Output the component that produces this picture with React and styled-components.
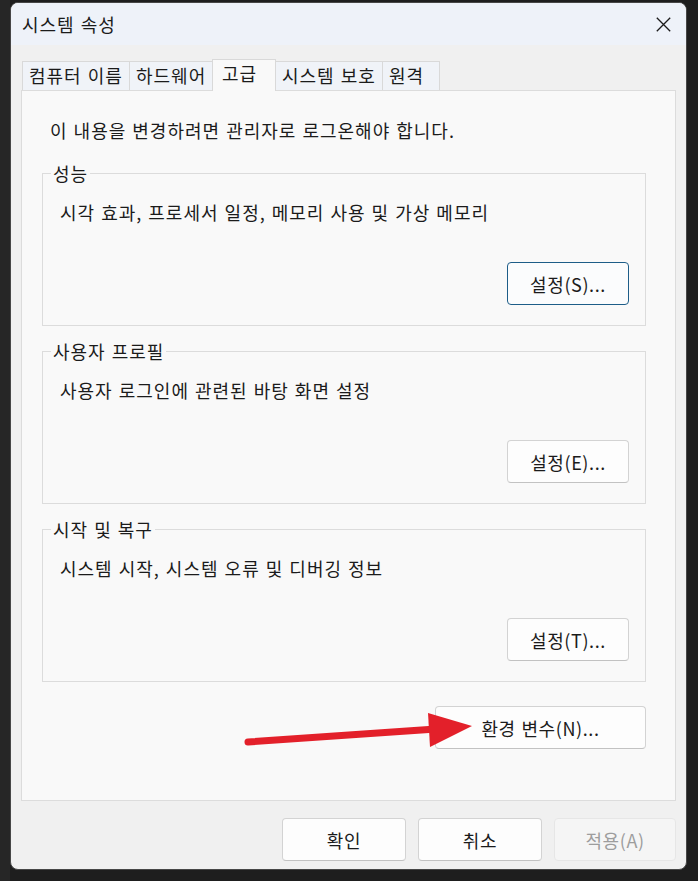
import React from "react";
import styled, { createGlobalStyle } from "styled-components";

const GlobalStyle = createGlobalStyle`
  html, body {
    margin: 0;
    padding: 0;
    background: #1f1f1f;
  }
  body {
    font-family: "Noto Sans CJK KR", "Noto Sans", sans-serif;
    color: #1b1b1b;
  }
  * { box-sizing: border-box; }
`;

const Desktop = styled.div`
  position: relative;
  width: 698px;
  height: 881px;
  padding: 2px 11px 11px 10px;
  background:
    linear-gradient(to right, #262626 0, #262626 10px, transparent 10px),
    #1e1e1e;
  overflow: hidden;
`;

const Dialog = styled.div`
  width: 677px;
  height: 868px;
  display: flex;
  flex-direction: column;
  background: #f0f0f0;
  border: 1px solid #474747;
  border-radius: 8px;
  overflow: hidden;
`;

const TitleBar = styled.div`
  height: 42px;
  flex: none;
  display: flex;
  align-items: center;
  justify-content: space-between;
  padding: 0 15px 0 11px;
  background: #eef2f9;
`;

const Title = styled.span`
  font-size: 18px;
  letter-spacing: 1px;
  word-spacing: 1px;
  line-height: 24px;
`;

const CloseButton = styled.div`
  width: 15px;
  height: 15px;
  display: flex;
  svg { display: block; }
`;

const Body = styled.div`
  flex: 1;
  display: flex;
  flex-direction: column;
  padding: 14px 10px 0 10px;
`;

const TabRow = styled.div`
  display: flex;
  align-items: flex-end;
  height: 31px;
  padding-left: 1px;
`;

const Tab = styled.div`
  position: relative;
  width: ${(p) => p.$w}px;
  height: ${(p) => (p.$active ? 32 : 29)}px;
  margin-left: ${(p) => (p.$first ? 0 : -1)}px;
  margin-bottom: ${(p) => (p.$active ? -1 : 0)}px;
  z-index: ${(p) => (p.$active ? 1 : 0)};
  padding-left: ${(p) => (p.$active ? 9 : 6)}px;
  border: 1px solid #d9d9d9;
  border-bottom: none;
  background: ${(p) => (p.$active ? "#f9f9f9" : "#f0f3f8")};
  font-size: 18px;
  letter-spacing: 1px;
  word-spacing: 1px;
  line-height: 26px;
  white-space: nowrap;
  overflow: hidden;
`;

const Panel = styled.div`
  height: 711px;
  display: flex;
  flex-direction: column;
  padding: 27px 29px 0 20px;
  background: #f9f9f9;
  border: 1px solid #dcdcdc;
`;

const Text = styled.div`
  font-size: 18px;
  letter-spacing: 1px;
  word-spacing: 1px;
  line-height: 24px;
  padding-left: ${(p) => p.$indent || 0}px;
  white-space: nowrap;
`;

const Group = styled.fieldset`
  margin: ${(p) => p.$top}px 0 0 0;
  padding: 0;
  border: 1px solid #dcdcdc;
  min-width: 0;
`;

const Legend = styled.legend`
  margin-left: 8px;
  padding: 0 2px;
  font-size: 18px;
  letter-spacing: 1px;
  word-spacing: 1px;
  line-height: 20px;
`;

const GroupBody = styled.div`
  display: flex;
  flex-direction: column;
  padding: 17px 16px 20px 17px;
`;

const ButtonRow = styled.div`
  display: flex;
  justify-content: flex-end;
  gap: 12px;
  margin-top: ${(p) => p.$top || 0}px;
`;

const Button = styled.div`
  width: ${(p) => p.$w}px;
  height: 43px;
  display: flex;
  align-items: center;
  justify-content: center;
  border-radius: 4px;
  font-size: 18px;
  letter-spacing: 0.6px;
  word-spacing: 1px;
  background: ${(p) => (p.$disabled ? "#f5f5f5" : p.$focus ? "#fbfcfd" : "#fdfdfd")};
  color: ${(p) => (p.$disabled ? "#9d9d9d" : "#1b1b1b")};
  border: 1px solid
    ${(p) => (p.$disabled ? "#e6e6e6" : p.$focus ? "#1d5d88" : "#d3d3d3")};
  border-bottom-color: ${(p) =>
    p.$disabled ? "#e6e6e6" : p.$focus ? "#1d5d88" : "#c2c2c2"};
  white-space: nowrap;
`;

const Footer = styled.div`
  display: flex;
  justify-content: flex-end;
  gap: 12px;
  padding-top: 17px;
`;

const ArrowOverlay = styled.svg`
  position: absolute;
  left: 0;
  top: 0;
  pointer-events: none;
`;

const tabs = [
  { label: "컴퓨터 이름", w: 108 },
  { label: "하드웨어", w: 84 },
  { label: "고급", w: 64, active: true },
  { label: "시스템 보호", w: 108 },
  { label: "원격", w: 58 },
];

const groups = [
  { title: "성능", desc: "시각 효과, 프로세서 일정, 메모리 사용 및 가상 메모리", btn: "설정(S)...", focus: true, top: 21 },
  { title: "사용자 프로필", desc: "사용자 로그인에 관련된 바탕 화면 설정", btn: "설정(E)...", top: 15 },
  { title: "시작 및 복구", desc: "시스템 시작, 시스템 오류 및 디버깅 정보", btn: "설정(T)...", top: 15 },
];

export default function App() {
  return (
    <>
      <GlobalStyle />
      <Desktop>
        <Dialog>
          <TitleBar>
            <Title>시스템 속성</Title>
            <CloseButton>
              <svg width="15" height="15" viewBox="0 0 15 15">
                <path d="M0.8 0.8 L14.2 14.2 M14.2 0.8 L0.8 14.2" stroke="#1b1b1b" strokeWidth="1.3" fill="none" />
              </svg>
            </CloseButton>
          </TitleBar>
          <Body>
            <TabRow>
              {tabs.map((t, i) => (
                <Tab key={t.label} $w={t.w} $active={t.active} $first={i === 0}>
                  {t.label}
                </Tab>
              ))}
            </TabRow>
            <Panel>
              <Text $indent={8}>이 내용을 변경하려면 관리자로 로그온해야 합니다.</Text>
              {groups.map((g) => (
                <Group key={g.title} $top={g.top}>
                  <Legend>{g.title}</Legend>
                  <GroupBody>
                    <Text>{g.desc}</Text>
                    <ButtonRow $top={38}>
                      <Button $w={122} $focus={g.focus}>{g.btn}</Button>
                    </ButtonRow>
                  </GroupBody>
                </Group>
              ))}
              <ButtonRow $top={24}>
                <Button $w={211}>환경 변수(N)...</Button>
              </ButtonRow>
            </Panel>
            <Footer>
              <Button $w={124}>확인</Button>
              <Button $w={124}>취소</Button>
              <Button $w={122} $disabled>적용(A)</Button>
            </Footer>
          </Body>
        </Dialog>
        <ArrowOverlay width="698" height="881" viewBox="0 0 698 881">
          <path d="M248 742 L436 729" stroke="#e3202a" strokeWidth="7" strokeLinecap="round" fill="none" />
          <polygon points="428,713 472,726 430,747" fill="#e3202a" />
        </ArrowOverlay>
      </Desktop>
    </>
  );
}
